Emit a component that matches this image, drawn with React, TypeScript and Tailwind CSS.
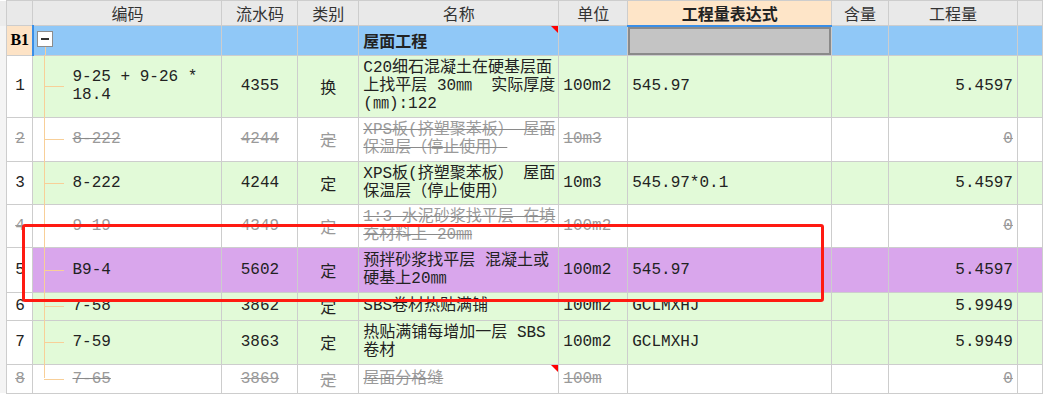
import React from "react";

type Row = {
  no: string;
  code: string[];
  serial: string;
  kind: string;
  name: string[];
  unit: string;
  expr: string;
  qty: string;
  h: number;
  bg: "green" | "white" | "purple";
  off?: boolean;
  flag?: boolean;
};

const ROWS: Row[] = [
  { no: "1", code: ["9-25 + 9-26 *", "18.4"], serial: "4355", kind: "换", name: ["C20细石混凝土在硬基层面", "上找平层 30㎜  实际厚度", "(㎜):122"], unit: "100m2", expr: "545.97", qty: "5.4597", h: 62, bg: "green" },
  { no: "2", code: ["8-222"], serial: "4244", kind: "定", name: ["XPS板(挤塑聚苯板） 屋面", "保温层（停止使用）"], unit: "10m3", expr: "", qty: "0", h: 44, bg: "white", off: true },
  { no: "3", code: ["8-222"], serial: "4244", kind: "定", name: ["XPS板(挤塑聚苯板） 屋面", "保温层（停止使用）"], unit: "10m3", expr: "545.97*0.1", qty: "5.4597", h: 43, bg: "green" },
  { no: "4", code: ["9-19"], serial: "4349", kind: "定", name: ["1:3 水泥砂浆找平层 在填", "充材料上 20㎜"], unit: "100m2", expr: "", qty: "0", h: 43, bg: "white", off: true },
  { no: "5", code: ["B9-4"], serial: "5602", kind: "定", name: ["预拌砂浆找平层 混凝土或", "硬基上20㎜"], unit: "100m2", expr: "545.97", qty: "5.4597", h: 45, bg: "purple" },
  { no: "6", code: ["7-58"], serial: "3862", kind: "定", name: ["SBS卷材热贴满铺"], unit: "100m2", expr: "GCLMXHJ", qty: "5.9949", h: 28, bg: "green" },
  { no: "7", code: ["7-59"], serial: "3863", kind: "定", name: ["热贴满铺每增加一层 SBS", "卷材"], unit: "100m2", expr: "GCLMXHJ", qty: "5.9949", h: 44, bg: "green" },
  { no: "8", code: ["7-65"], serial: "3869", kind: "定", name: ["屋面分格缝"], unit: "100m", expr: "", qty: "0", h: 29, bg: "white", off: true, flag: true },
];

const bgCls = { green: "bg-[#e2fad8]", white: "bg-white", purple: "bg-[#d9a6ec]" };

const cellFont = { fontFamily: '"Liberation Mono", "Noto Sans CJK SC", monospace' };

function Lines({ lines, off }: { lines: string[]; off?: boolean }) {
  return (
    <div className={off ? "text-[#9a9a9a] line-through decoration-[#8a8a8a]" : "text-[#222]"}>
      {lines.map((l, i) => (
        <div key={i} className="whitespace-pre">{l}</div>
      ))}
    </div>
  );
}

function Triangle() {
  return <span className="absolute right-0 top-0 w-0 h-0 border-t-[7px] border-l-[7px] border-t-[#f00] border-l-transparent" />;
}

export default function App() {
  const td = "border border-[#cdcdcd] p-0 align-middle";
  return (
    <div className="relative w-[1043px] h-[416px] bg-white overflow-hidden" style={cellFont}>
      <table className="table-fixed border-collapse text-[16px] leading-[18px]">
        <colgroup>
          <col className="w-[7px]" />
          <col className="w-[26px]" />
          <col className="w-[189px]" />
          <col className="w-[76px]" />
          <col className="w-[61px]" />
          <col className="w-[200px]" />
          <col className="w-[69px]" />
          <col className="w-[204px]" />
          <col className="w-[57px]" />
          <col className="w-[129px]" />
          <col className="w-[25px]" />
        </colgroup>
        <thead>
          <tr className="h-[25px] bg-[#e9e9e9] text-[#333]" style={{ fontFamily: '"Noto Sans CJK SC", sans-serif' }}>
            <th className="p-0 bg-[#ececec]" />
            <th className={td} />
            <th className={td + " font-normal"}>编码</th>
            <th className={td + " font-normal"}>流水码</th>
            <th className={td + " font-normal"}>类别</th>
            <th className={td + " font-normal"}>名称</th>
            <th className={td + " font-normal"}>单位</th>
            <th className={td + " font-bold bg-[#fee5c8] border-b-2 border-b-[#3a8ee6] text-[#222]"}>工程量表达式</th>
            <th className={td + " font-normal"}>含量</th>
            <th className={td + " font-normal"}>工程量</th>
            <th className={td} />
          </tr>
        </thead>
        <tbody>
          <tr className="h-[29px] bg-[#90c8f7]">
            <td className="p-0 bg-[#f4f4f4]" />
            <td className={td + " bg-[#fde3c6] border-r-2 border-r-[#3a8ee6] text-center font-bold"} style={{ fontFamily: '"Liberation Serif", serif' }}>
              B1
            </td>
            <td className={td}>
              <div className="relative h-[28px]">
                <span className="absolute left-[3px] top-[5px] w-[16px] h-[16px] border border-[#8c8c8c] bg-white flex items-center justify-center">
                  <span className="block w-[8px] h-[2px] bg-[#333]" />
                </span>
                <span className="absolute left-[11px] top-[21px] bottom-[-1px] w-[1px] bg-[#f8cf98]" />
              </div>
            </td>
            <td className={td} />
            <td className={td} />
            <td className={td}>
              <div className="relative h-[28px] flex items-center pl-[4px] font-bold text-[#222]" style={{ fontFamily: '"Noto Sans CJK SC", sans-serif' }}>
                屋面工程
                <Triangle />
              </div>
            </td>
            <td className={td} />
            <td className={td}>
              <div className="h-[28px] bg-[#c4c4c4] border-2 border-[#8a8a8a]" />
            </td>
            <td className={td} />
            <td className={td} />
            <td className={td} />
          </tr>
          {ROWS.map((r, idx) => {
            const last = idx === ROWS.length - 1;
            const off = r.off;
            const textCls = off ? "text-[#9a9a9a] line-through" : "text-[#222]";
            return (
              <tr key={r.no} className={bgCls[r.bg]} style={{ height: r.h }}>
                <td className="p-0 bg-[#f4f4f4]" />
                <td className={td + " bg-white text-center " + textCls}>{r.no}</td>
                <td className={td}>
                  <div className="relative flex items-center pl-[39px]" style={{ height: r.h - 1 }}>
                    <span className={"absolute left-[11px] top-[-1px] w-[1px] bg-[#f8cf98] " + (last ? "h-1/2" : "bottom-[-1px]")} />
                    <span className="absolute left-[11px] top-1/2 w-[20px] h-[1px] bg-[#f8cf98]" />
                    <Lines lines={r.code} off={off} />
                  </div>
                </td>
                <td className={td + " text-center " + textCls}>{r.serial}</td>
                <td className={td + " text-center " + textCls} style={{ fontFamily: '"Noto Sans CJK SC", sans-serif' }}>
                  {r.kind}
                </td>
                <td className={td}>
                  <div className="relative flex items-center pl-[4px]" style={{ height: r.h - 1 }}>
                    <Lines lines={r.name} off={off} />
                    {r.flag && <Triangle />}
                  </div>
                </td>
                <td className={td + " pl-[4px] " + textCls}>{r.unit}</td>
                <td className={td + " pl-[4px] text-[#222]"}>{r.expr}</td>
                <td className={td} />
                <td className={td + " text-right pr-[4px] " + textCls}>{r.qty}</td>
                <td className={td} />
              </tr>
            );
          })}
        </tbody>
      </table>
      <div className="absolute left-[22px] top-[224px] w-[802px] h-[78px] border-[3px] border-[#ff1a12] rounded-[3px] pointer-events-none" />
    </div>
  );
}
